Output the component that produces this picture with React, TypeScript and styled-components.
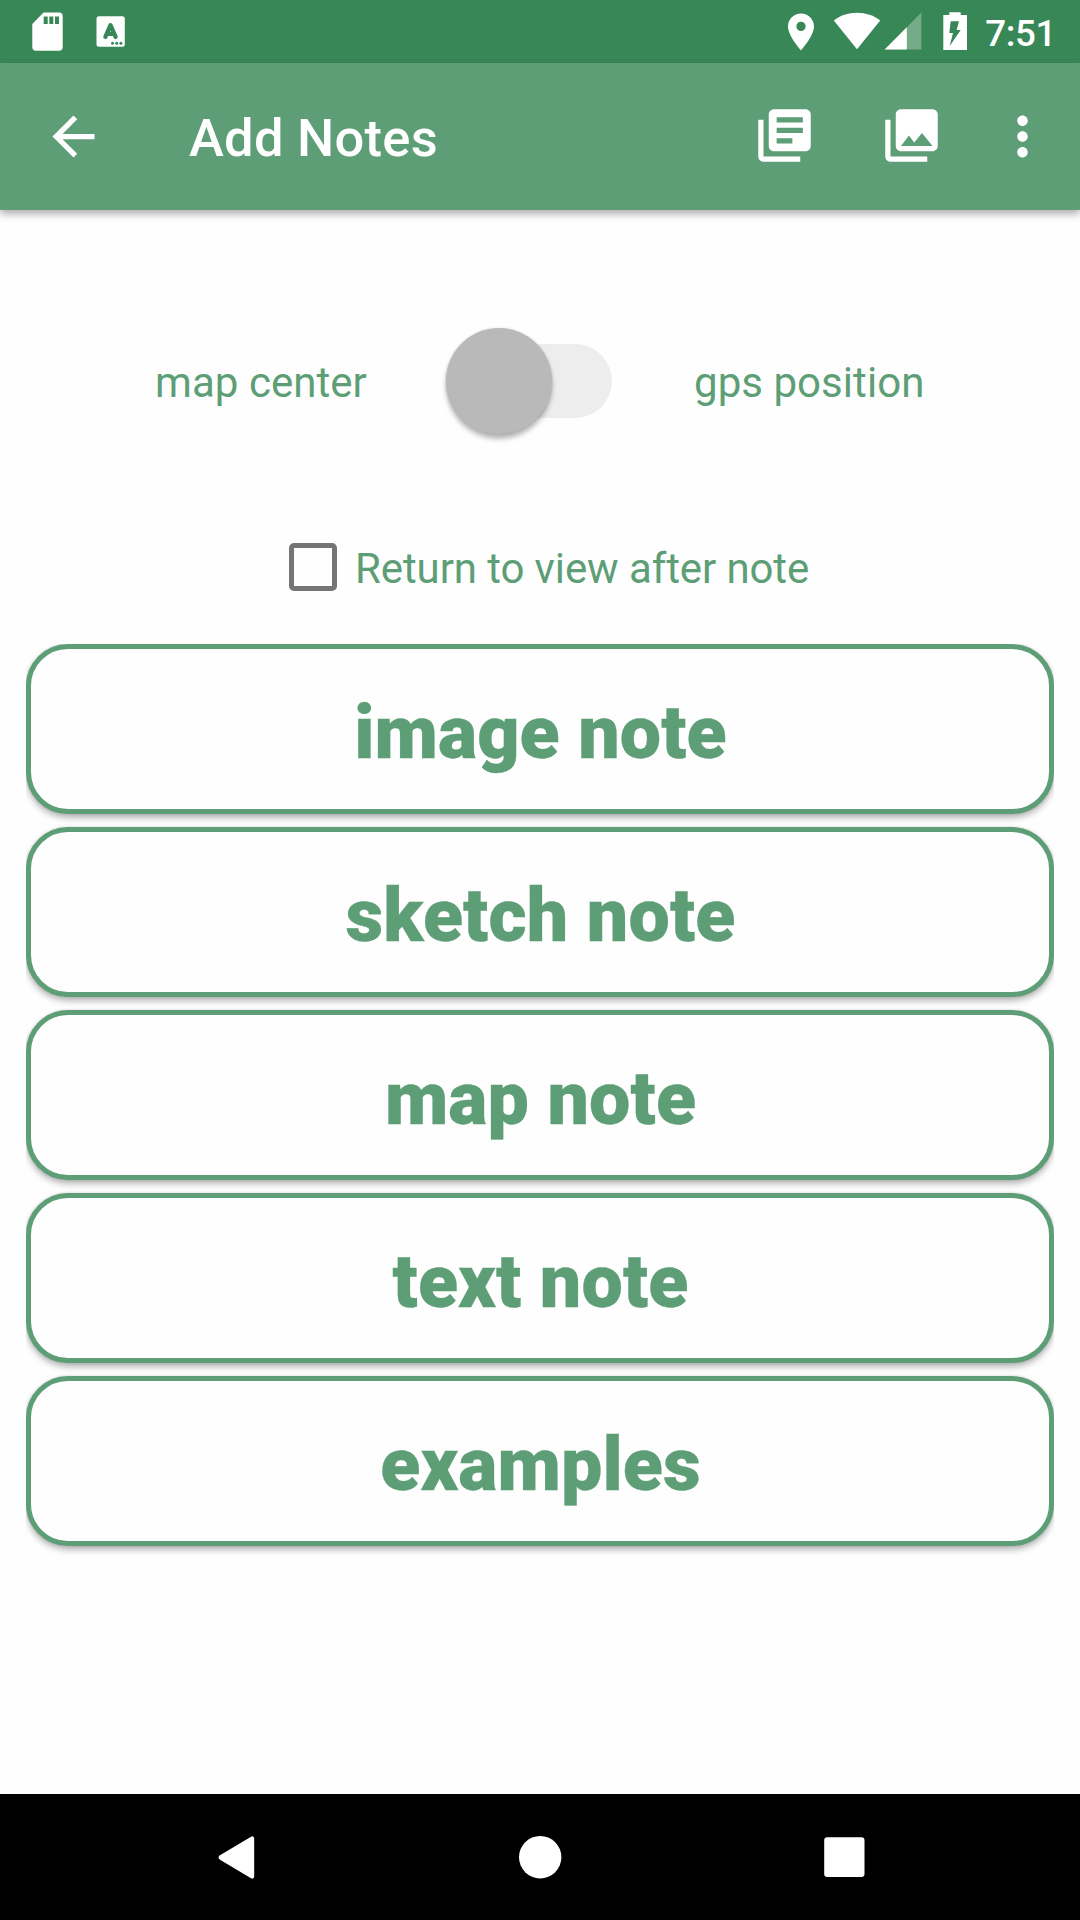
import React, { useState } from "react";
import styled, { createGlobalStyle } from "styled-components";

const GREEN = "#5d9e76";
const DARK_GREEN = "#388757";

const GlobalStyle = createGlobalStyle`
  body { margin: 0; background: #fefefe; }
  * { box-sizing: border-box; }
  button { font: inherit; border: 0; padding: 0; background: none; color: inherit; }
`;

const Screen = styled.div`
  display: flex;
  flex-direction: column;
  width: 1080px;
  height: 1920px;
  overflow: hidden;
  background: #fefefe;
  color: ${GREEN};
  font-family: Roboto, "Liberation Sans", sans-serif;
`;

const StatusBar = styled.header`
  display: flex;
  flex: none;
  justify-content: space-between;
  height: 63px;
  padding: 0 24px 0 26px;
  background: ${DARK_GREEN};
  color: #fff;
`;

const StatusGroup = styled.div<{ $gap?: number }>`
  display: flex;
  align-items: center;
  gap: ${(p) => p.$gap ?? 0}px;
`;

const Clock = styled.span`
  margin-left: 17px;
  font-size: 36.75px;
  font-weight: 500;
  line-height: 44px;
  letter-spacing: -0.4px;
  padding-top: 4px;
`;

const Toolbar = styled.nav`
  display: flex;
  flex: none;
  align-items: center;
  height: 147px;
  padding: 0 26px 0 42px;
  background: ${GREEN};
  color: #fff;
  box-shadow: 0 4px 8px rgba(0, 0, 0, 0.32);
`;

const IconButton = styled.button<{ $left?: number; $lift?: number }>`
  display: flex;
  width: 63px;
  height: 63px;
  margin-left: ${(p) => p.$left ?? 0}px;
  margin-bottom: ${(p) => p.$lift ?? 0}px;
`;

const Title = styled.h1`
  flex: 1;
  margin: 2px 0 0 84px;
  font-size: 52.5px;
  font-weight: 500;
  line-height: 62px;
  letter-spacing: 0.25px;
`;

const Content = styled.main`
  display: flex;
  flex: 1;
  flex-direction: column;
  padding: 117px 26px 0;
`;

const PositionRow = styled.div`
  display: flex;
  align-items: center;
  height: 107px;
  padding-left: 129px;
  font-size: 42px;
  line-height: 50px;
`;

const PositionLabel = styled.span<{ $width: number }>`
  width: ${(p) => p.$width}px;
  padding-top: 4px;
  letter-spacing: 0.05px;
  white-space: nowrap;
`;

const Switch = styled.button<{ $on: boolean }>`
  display: flex;
  align-items: center;
  justify-content: ${(p) => (p.$on ? "flex-end" : "flex-start")};
  width: 165px;
  height: 74px;
  margin: 0 82px 0 80px;
  border-radius: 37px;
  background: #ededed;
`;

const Thumb = styled.span`
  flex: none;
  width: 106px;
  height: 106px;
  margin: 0 -1px;
  border-radius: 50%;
  background: #b9b9b9;
  box-shadow: 0 5px 5px rgba(0, 0, 0, 0.28), 0 0 3px rgba(0, 0, 0, 0.12);
`;

const ReturnOption = styled.label`
  display: flex;
  align-items: center;
  height: 84px;
  margin: 91px 0 35px 263px;
  font-size: 42px;
  line-height: 50px;
`;

const Checkbox = styled.input`
  appearance: none;
  width: 48px;
  height: 48px;
  margin: 0 18px 0 0;
  border: 5.5px solid #757575;
  border-radius: 5px;
  &:checked { background: ${GREEN}; border-color: ${GREEN}; }
`;

const OptionText = styled.span`
  padding-top: 3px;
  letter-spacing: -0.1px;
  white-space: nowrap;
`;

const NoteList = styled.div`
  display: flex;
  flex-direction: column;
  gap: 13px;
  padding-bottom: 12px;
  overflow: hidden;
`;

const NoteButton = styled.button`
  flex: none;
  height: 170px;
  padding: 8px 0 0 1px;
  border: 5px solid ${GREEN};
  border-radius: 42px;
  background: #fefefe;
  color: ${GREEN};
  font-size: 73.5px;
  font-weight: 900;
  line-height: 86px;
  letter-spacing: 0.12px;
  -webkit-text-stroke: 0.3px ${GREEN};
  box-shadow: 0 4px 6px rgba(0, 0, 0, 0.28), 0 0 3px rgba(0, 0, 0, 0.14);
`;

const NavigationBar = styled.footer`
  display: flex;
  flex: none;
  align-items: center;
  justify-content: center;
  gap: 241px;
  height: 126px;
  background: #000;
`;

const NavButton = styled.button`
  display: flex;
  width: 63px;
  height: 63px;
`;

const MaterialIcon = ({ d }: { d: string }) => (
  <svg width="63" height="63" viewBox="0 0 24 24" fill="currentColor">
    <path d={d} />
  </svg>
);

const ARROW = "M20 11H7.83l5.59-5.59L12 4l-8 8 8 8 1.41-1.41L7.83 13H20v-2z";
const BOOKS =
  "M4 6H2v14c0 1.1.9 2 2 2h14v-2H4V6zm16-4H8c-1.1 0-2 .9-2 2v12c0 1.1.9 2 2 2h12c1.1 0 2-.9 2-2V4c0-1.1-.9-2-2-2zm-1 5H9V5h10v2zm0 4H9V9h10v2zm-4 4H9v-2h6v2z";
const PHOTOS =
  "M22 16V4c0-1.1-.9-2-2-2H8c-1.1 0-2 .9-2 2v12c0 1.1.9 2 2 2h12c1.1 0 2-.9 2-2zm-11-4l2.03 2.71L16 11l4 5H8l3-4zM2 6v14c0 1.1.9 2 2 2h14v-2H4V6H2z";
const MORE =
  "M12 8c1.1 0 2-.9 2-2s-.9-2-2-2-2 .9-2 2 .9 2 2 2zm0 2c-1.1 0-2 .9-2 2s.9 2 2 2 2-.9 2-2-.9-2-2-2zm0 6c-1.1 0-2 .9-2 2s.9 2 2 2 2-.9 2-2-.9-2-2-2z";

const SdCardIcon = () => (
  <svg width="42" height="63" viewBox="26 0 42 63">
    <path
      fill="#fff"
      fillRule="evenodd"
      d="M43.5 12.6H59a3.7 3.7 0 0 1 3.7 3.7V47a3.7 3.7 0 0 1-3.7 3.7H36a3.7 3.7 0 0 1-3.7-3.7V24zM43.7 16.5V24h4v-7.5zM49.3 16.5V24h4v-7.5zM55 16.5V24h4v-7.5z"
    />
  </svg>
);

const KeyboardIcon = () => (
  <svg width="42" height="63" viewBox="90 0 42 63">
    <rect x="96.5" y="16.2" width="28.3" height="30.6" rx="2.5" fill="#fff" />
    <path
      d="M105.4 36.9 110.5 25.2 115.6 36.9M107 33.8H114"
      fill="none"
      stroke={DARK_GREEN}
      strokeWidth="4.3"
      strokeLinecap="round"
      strokeLinejoin="round"
    />
    <g fill={DARK_GREEN}>
      <circle cx="112.5" cy="43.3" r="1.5" />
      <circle cx="116.7" cy="43.3" r="1.5" />
      <circle cx="120.9" cy="43.3" r="1.5" />
    </g>
  </svg>
);

const LocationIcon = () => (
  <svg width="45" height="63" viewBox="781 0 45 63">
    <path
      fill="#fff"
      fillRule="evenodd"
      d="M801 13.4c-7.2 0-13 5.8-13 13C788 36.2 801 50.2 801 50.2s13-14 13-23.8c0-7.2-5.8-13-13-13zm0 17.6a4.65 4.65 0 1 1 0-9.3 4.65 4.65 0 0 1 0 9.3z"
    />
  </svg>
);

const WifiIcon = () => (
  <svg width="56" height="63" viewBox="826 0 56 63">
    <path fill="#fff" d="M857 49.2 833.8 20.5C840 15.6 848.2 12.8 857 12.8S874 15.6 880.2 20.5z" />
  </svg>
);

const SignalIcon = () => (
  <svg width="50" height="63" viewBox="882 0 50 63">
    <path fill="#fff" fillOpacity=".3" d="M921.4 12.6V49.4H884.7z" />
    <path fill="#fff" d="M906.8 27.2V49.4H884.7z" />
  </svg>
);

const BatteryIcon = () => (
  <svg width="36" height="63" viewBox="932 0 36 63">
    <path
      fill="#fff"
      fillRule="evenodd"
      d="M949.3 12.3H960.7V15H967V49.9H943.3V15H949.3zM950.7 21.3 949.3 33H953L949.7 46 960.7 30H956.7L959 21.3z"
    />
  </svg>
);

const NOTE_TYPES = ["image note", "sketch note", "map note", "text note", "examples"];

export default function App() {
  const [useGps, setUseGps] = useState(false);
  const [returnToView, setReturnToView] = useState(false);

  return (
    <>
      <GlobalStyle />
      <Screen>
        <StatusBar>
          <StatusGroup $gap={22}>
            <SdCardIcon />
            <KeyboardIcon />
          </StatusGroup>
          <StatusGroup>
            <LocationIcon />
            <WifiIcon />
            <SignalIcon />
            <BatteryIcon />
            <Clock>7:51</Clock>
          </StatusGroup>
        </StatusBar>
        <Toolbar>
          <IconButton aria-label="Back"><MaterialIcon d={ARROW} /></IconButton>
          <Title>Add Notes</Title>
          <IconButton aria-label="Note list" $lift={2}><MaterialIcon d={BOOKS} /></IconButton>
          <IconButton aria-label="Gallery" $left={64} $lift={2}><MaterialIcon d={PHOTOS} /></IconButton>
          <IconButton aria-label="More options" $left={48}><MaterialIcon d={MORE} /></IconButton>
        </Toolbar>
        <Content>
          <PositionRow>
            <PositionLabel $width={212}>map center</PositionLabel>
            <Switch
              role="switch"
              aria-checked={useGps}
              $on={useGps}
              onClick={() => setUseGps(!useGps)}
            >
              <Thumb />
            </Switch>
            <PositionLabel $width={235}>gps position</PositionLabel>
          </PositionRow>
          <ReturnOption>
            <Checkbox
              type="checkbox"
              checked={returnToView}
              onChange={() => setReturnToView(!returnToView)}
            />
            <OptionText>Return to view after note</OptionText>
          </ReturnOption>
          <NoteList>
            {NOTE_TYPES.map((name) => (
              <NoteButton key={name}>{name}</NoteButton>
            ))}
          </NoteList>
        </Content>
        <NavigationBar>
          <NavButton aria-label="Back">
            <svg width="63" height="63" viewBox="4.2 0 63 63">
              <path fill="#fff" d="M19.2 29.3 49.8 10.9Q53.4 9.2 53.4 13V50Q53.4 53.8 49.8 52.1L19.2 33.7Q16.2 31.5 19.2 29.3z" />
            </svg>
          </NavButton>
          <NavButton aria-label="Home">
            <svg width="63" height="63" viewBox="0 0 63 63">
              <circle cx="31.2" cy="31.2" r="21.2" fill="#fff" />
            </svg>
          </NavButton>
          <NavButton aria-label="Recents">
            <svg width="63" height="63" viewBox="0 0 63 63">
              <rect x="11.2" y="11.3" width="40.3" height="39.8" rx="3" fill="#fff" />
            </svg>
          </NavButton>
        </NavigationBar>
      </Screen>
    </>
  );
}
